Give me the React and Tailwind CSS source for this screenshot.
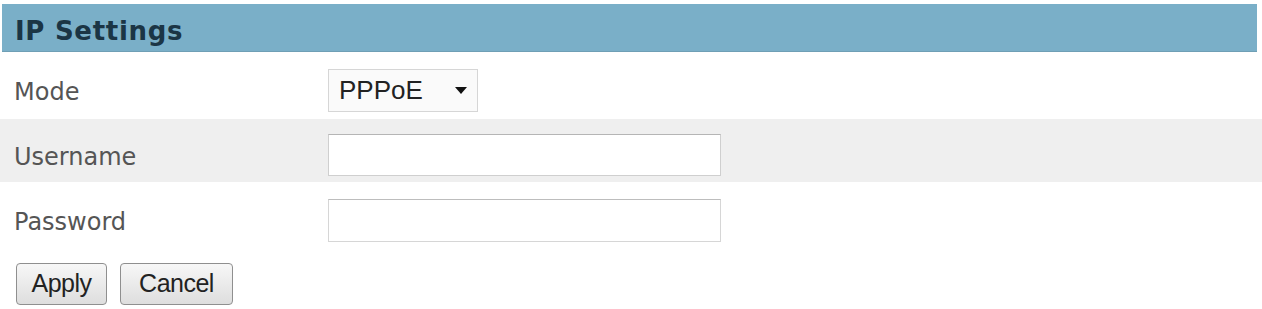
export default function App() {
  const label = "w-[328px] shrink-0 pl-[14px] text-[24px] leading-[28px] text-[#555555] [font-family:'DejaVu_Sans',Verdana,sans-serif]";
  return (
    <div className="w-[1262px] h-[309px] bg-white overflow-hidden">
      <div className="pt-[4px] px-[2px] w-[1259px]">
        <div className="h-[48px] bg-[#7aafc8] flex items-center pl-[13px] border-b border-[#6f9fb5]">
          <span className="text-[26px] font-bold tracking-[0.7px] text-[#1b3545] [font-family:'DejaVu_Sans',Verdana,sans-serif] mt-[7px]">IP Settings</span>
        </div>
      </div>
      <div className="h-[67px] flex items-start pt-[17px] w-[1260px]">
        <div className={label + " mt-[9px]"}>Mode</div>
        <div className="w-[150px] h-[43px] bg-[#fafafa] border border-[#d6d6d6] flex items-center pl-[10px] pr-[10px] justify-between">
          <span className="text-[26px] text-[#222] [font-family:'Liberation_Sans',Arial,sans-serif]">PPPoE</span>
          <svg width="12" height="8" viewBox="0 0 12 8"><path d="M0 0h12L6 7z" fill="#111" /></svg>
        </div>
      </div>
      <div className="h-[63px] bg-[#efefef] flex items-start pt-[15px] w-[1262px]">
        <div className={label + " mt-[9px]"}>Username</div>
        <div className="w-[393px] h-[42px] bg-white border border-[#cfcfcf] border-t-[#b5b5b5]"></div>
      </div>
      <div className="h-[66px] flex items-start pt-[17px]">
        <div className={label + " mt-[9px]"}>Password</div>
        <div className="w-[393px] h-[43px] bg-white border border-[#d6d6d6] border-t-[#bdbdbd]"></div>
      </div>
      <div className="flex gap-[13px] pl-[16px] pt-[15px]">
        <button className="w-[91px] h-[42px] rounded-[4px] border border-[#8f8f8f] bg-gradient-to-b from-[#f7f7f7] to-[#dedede] text-[25px] text-[#222] [font-family:'Liberation_Sans',Arial,sans-serif] tracking-[-0.5px]">Apply</button>
        <button className="w-[113px] h-[42px] rounded-[4px] border border-[#8f8f8f] bg-gradient-to-b from-[#f7f7f7] to-[#dedede] text-[25px] text-[#222] [font-family:'Liberation_Sans',Arial,sans-serif] tracking-[-0.5px]">Cancel</button>
      </div>
    </div>
  );
}
